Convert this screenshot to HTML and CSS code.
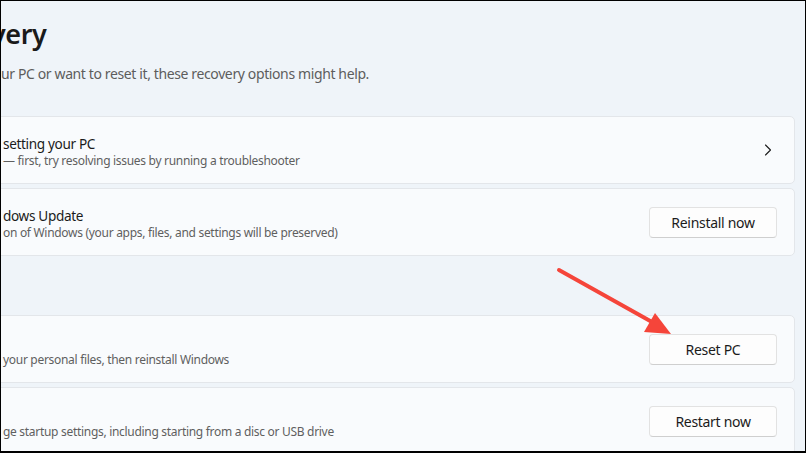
FILE: index.html
```html
<!DOCTYPE html>
<html lang="en">
<head>
<meta charset="utf-8">
<title>Recovery</title>
<link rel="stylesheet" href="styles.css">
</head>
<body>
<div class="frame">
  <main class="page">
    <h1 class="title">very</h1>
    <p class="subtitle">ur PC or want to reset it, these recovery options might help.</p>

    <section class="group">
      <div class="card">
        <div class="text">
          <div class="card-title">setting your PC</div>
          <div class="card-sub">— first, try resolving issues by running a troubleshooter</div>
        </div>
        <svg class="chevron" width="8" height="12" viewBox="0 0 8 12" aria-hidden="true"><path d="M1.5 1 L6.5 6 L1.5 11" fill="none" stroke="#1b1b1b" stroke-width="1.1" stroke-linecap="round" stroke-linejoin="round"/></svg>
      </div>
      <div class="card">
        <div class="text">
          <div class="card-title">dows Update</div>
          <div class="card-sub">on of Windows (your apps, files, and settings will be preserved)</div>
        </div>
        <button class="btn">Reinstall now</button>
      </div>
    </section>

    <section class="group second">
      <div class="card">
        <div class="text">
          <div class="card-title"></div>
          <div class="card-sub">your personal files, then reinstall Windows</div>
        </div>
        <button class="btn">Reset PC</button>
      </div>
      <div class="card">
        <div class="text">
          <div class="card-title"></div>
          <div class="card-sub">ge startup settings, including starting from a disc or USB drive</div>
        </div>
        <button class="btn">Restart now</button>
      </div>
    </section>
  </main>

  <svg class="arrow" width="806" height="453" viewBox="0 0 806 453" aria-hidden="true">
    <line x1="559" y1="270" x2="652" y2="322" stroke="#f5453a" stroke-width="4" stroke-linecap="round"/>
    <polygon points="671,334 644,332 655,313" fill="#f5453a"/>
  </svg>
</div>
</body>
</html>
```

FILE: styles.css
```css
* { box-sizing: border-box; }

html, body {
  margin: 0;
  padding: 0;
  background: #000;
}

.frame {
  position: relative;
  width: 806px;
  height: 453px;
  border: 1px solid #000;
  border-bottom-width: 2px;
  background: #eff4f9;
  overflow: hidden;
  font-family: "Noto Sans", "Segoe UI", "Liberation Sans", sans-serif;
  color: #1b1b1b;
}

.page {
  display: flex;
  flex-direction: column;
  padding: 0 10px 0 0;
}

.title {
  margin: 14px 0 0 -10px;
  font-size: 27px;
  line-height: 38px;
  font-weight: 600;
  color: #1a1a1a;
  letter-spacing: -0.4px;
}

.subtitle {
  margin: 11px 0 0 0;
  font-size: 14px;
  line-height: 20px;
  color: #5d5d5d;
  letter-spacing: -0.38px;
}

.group {
  display: flex;
  flex-direction: column;
  gap: 4px;
  margin: 32px 0 0 -20px;
}

.group.second {
  margin-top: 59px;
}

.card {
  display: flex;
  align-items: center;
  justify-content: space-between;
  height: 68px;
  padding: 0 17px 0 21px;
  background: #f9fbfd;
  border: 1px solid #e3e6ea;
  border-radius: 5px;
}

.text {
  display: flex;
  flex-direction: column;
  padding-top: 4px;
}

.card-title {
  height: 18px;
  font-size: 13.6px;
  line-height: 18px;
  color: #1b1b1b;
  letter-spacing: -0.35px;
}

.card-sub {
  font-size: 12px;
  line-height: 16px;
  color: #5f5f5f;
  letter-spacing: -0.3px;
}

.chevron {
  margin-right: 5px;
}

.btn {
  width: 128px;
  height: 31px;
  padding: 0;
  font-family: inherit;
  font-size: 14px;
  color: #1b1b1b;
  background: #fdfdfd;
  border: 1px solid #e2e2e2;
  border-bottom-color: #cfcfcf;
  border-radius: 4px;
  letter-spacing: -0.3px;
}

.arrow {
  position: absolute;
  left: -1px;
  top: -1px;
  pointer-events: none;
}
```
